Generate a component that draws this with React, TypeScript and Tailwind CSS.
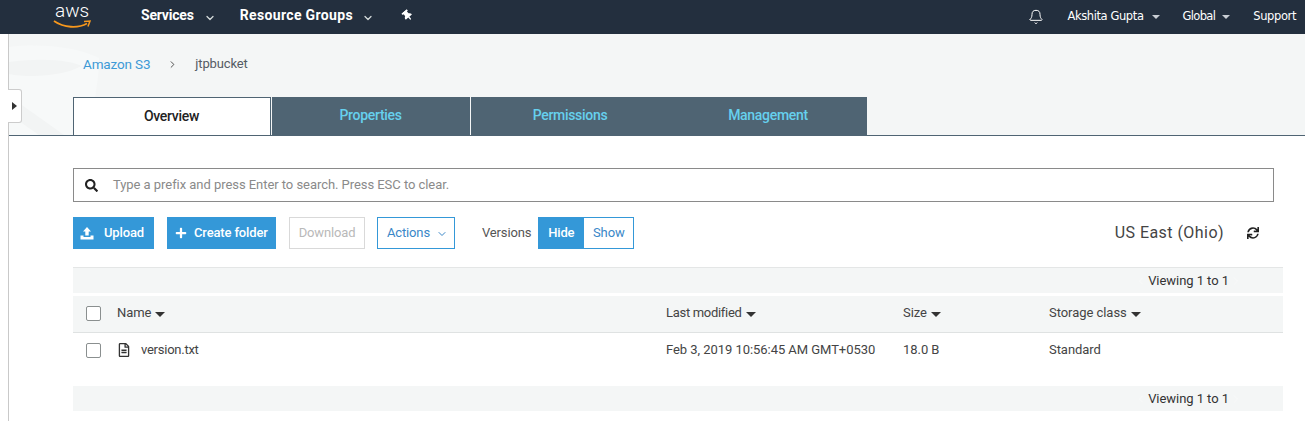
import React from "react";
import { ChevronDown, ChevronLeft, ChevronRight, Bell } from "lucide-react";
import { FaSearch, FaSync, FaThumbtack, FaRegFileAlt, FaPlus } from "react-icons/fa";

function Caret() {
  return <span className="inline-block w-0 h-0 ml-[4px] mt-[2px] border-x-[5px] border-x-transparent border-t-[5px] border-t-[#333]" />;
}

function SmallCaret() {
  return <span className="inline-block w-0 h-0 border-x-[4px] border-x-transparent border-t-[4px] border-t-[#c9ced4]" />;
}

function Check() {
  return <span className="block w-[15px] h-[15px] border border-[#8a8f8f] rounded-[2px] bg-white" />;
}

function Pager() {
  return (
    <div className="h-[25px] bg-[#f4f6f6] flex items-center justify-end pr-[54px] text-[13px] leading-none text-[#333]">
      <ChevronLeft size={12} strokeWidth={1.5} className="text-[#fafafa] mr-[1px]" />
      <span className="tracking-[-0.05px]">Viewing 1 to 1</span>
      <ChevronRight size={12} strokeWidth={1.5} className="text-[#fafafa] ml-[1px] -mr-[13px]" />
    </div>
  );
}

export default function App() {
  return (
    <div className="w-[1305px] h-[421px] overflow-hidden bg-white font-['Roboto',sans-serif] text-[#444]">
      {/* top nav */}
      <div className="h-[34px] bg-[#232f3e] flex items-center text-white">
        <div className="w-[141px] pl-[54px] shrink-0">
          <svg width="38" height="28" viewBox="0 0 38 28" className="mt-[1px] overflow-visible">
            <text x="1" y="13" fontFamily="Roboto, sans-serif" fontSize="19" fontWeight="300" fill="#fff">aws</text>
            <path d="M0 17 C10 24 24 24.500 33 19.500" fill="none" stroke="#f7981d" strokeWidth="1.800" />
            <path d="M30 17.500 L36 17 L34 22.500" fill="none" stroke="#f7981d" strokeWidth="1.500" />
          </svg>
        </div>
        <span className="text-[14px] font-bold tracking-[-0.2px] mt-[-3px]">Services</span>
        <ChevronDown size={12} strokeWidth={2.5} className="ml-[10px] mt-[2px] text-[#d5dbdb]" />
        <span className="ml-[24px] text-[14px] font-bold tracking-[0.35px] mt-[-3px]">Resource Groups</span>
        <ChevronDown size={12} strokeWidth={2.5} className="ml-[9px] mt-[2px] text-[#d5dbdb]" />
        <FaThumbtack size={11} className="ml-[28px] -mt-[3px] rotate-[-40deg]" />
        <div className="ml-auto flex items-center text-[11.500px] font-['DejaVu_Sans',sans-serif] tracking-[-0.4px]">
          <Bell size={16} strokeWidth={1.5} className="mr-[23px]" />
          <span>Akshita Gupta</span>
          <span className="ml-[8px] mr-[23px] flex"><SmallCaret /></span>
          <span className="tracking-[-0.65px]">Global</span>
          <span className="ml-[7px] mr-[23px] flex"><SmallCaret /></span>
          <span className="mr-[9px]">Support</span>
        </div>
      </div>

      <div className="flex h-[387px]">
        {/* side rail */}
        <div className="relative z-10 w-[9px] shrink-0 border-r border-[#c9c9c9] bg-white">
          <div className="absolute left-[8px] top-[55px] w-[14px] h-[34px] bg-white border border-l-0 border-[#ccc] rounded-r-[3px] flex items-center justify-center">
            <span className="w-0 h-0 border-y-[4px] border-y-transparent border-l-[5px] border-l-[#333]" />
          </div>
        </div>

        <div className="flex-1 min-w-0">
          {/* header band */}
          <div className="relative h-[102px] bg-[#f4f6f6] border-b border-[#4f6473] overflow-hidden">
            <svg width="110" height="101" viewBox="0 0 110 101" className="absolute left-0 top-0">
              <path d="M0 13 C35 9 70 14 90 24 C90 50 84 70 80 101 H0 Z" fill="#f7f9f9" />
              <path d="M0 28 C35 23 65 27 72 32 C60 40 25 45 0 40 Z" fill="#f2f4f4" />
              <path d="M0 62 L55 101 H30 L0 80 Z" fill="#f2f4f4" />
            </svg>
            <div className="relative flex items-center pt-[22px] pl-[74px] text-[13.500px] leading-[16px] tracking-[-0.15px]">
              <span className="text-[#3d9ad6]">Amazon S3</span>
              <ChevronRight size={11} strokeWidth={2} className="ml-[17px] text-[#444]" />
              <span className="ml-[17px] text-[#545b64] text-[13px]">jtpbucket</span>
            </div>
            <div className="absolute left-[64px] top-[63px] flex h-[39px] text-[14px] tracking-[-0.3px] font-medium">
              <div className="w-[198px] h-[39px] pb-[2px] pr-[1px] bg-white border border-b-0 border-[#4f6473] flex items-center justify-center text-[#222]">Overview</div>
              <div className="ml-[1px] w-[198px] h-[38px] pb-[2px] pr-[1px] bg-[#4f6473] flex items-center justify-center text-[#66d0ee]">Properties</div>
              <div className="ml-[1px] w-[396px] h-[38px] pb-[2px] bg-[#4f6473] flex items-center text-[#66d0ee]">
                <span className="w-[198px] text-center">Permissions</span>
                <span className="w-[198px] text-center">Management</span>
              </div>
            </div>
          </div>

          <div className="pl-[64px] pr-[22px]">
            {/* search */}
            <div className="mt-[32px] mr-[9px] h-[34px] border border-[#8a8a8a] flex items-center pl-[11px] text-[13px] text-[#8a8a8a] tracking-[-0.05px]">
              <FaSearch size={13} className="text-[#222]" />
              <span className="ml-[15px]">Type a prefix and press Enter to search. Press ESC to clear.</span>
            </div>

            {/* toolbar */}
            <div className="mt-[15px] h-[32px] flex items-center text-[13px] tracking-[-0.15px]">
              <div className="w-[81px] h-[32px] pb-[1px] bg-[#3498d8] text-white flex items-center pl-[7px] font-medium">
                <svg width="14" height="14" viewBox="0 0 14 14" fill="#fff">
                  <path d="M7 1 L11 5.500 H8.700 V9.500 H5.300 V5.500 H3 Z" />
                  <path d="M0.500 9.500 H3.500 V11 H10.500 V9.500 H13.500 V13.500 H0.500 Z" />
                </svg>
                <span className="ml-[10px]">Upload</span>
              </div>
              <div className="ml-[13px] w-[109px] h-[32px] pb-[1px] bg-[#3498d8] text-white flex items-center pl-[8px] font-medium">
                <FaPlus size={12} />
                <span className="ml-[7px]">Create folder</span>
              </div>
              <div className="ml-[13px] w-[76px] h-[32px] pb-[1px] border border-[#d9d9d9] text-[#b9b9b9] flex items-center justify-center">Download</div>
              <div className="ml-[12px] w-[78px] h-[32px] pb-[1px] border border-[#3498d8] text-[#3a87c8] flex items-center pl-[9px]">
                Actions
                <ChevronDown size={12} strokeWidth={2} className="ml-[6px] mt-[2px]" />
              </div>
              <span className="ml-[27px] pb-[1px] text-[#555]">Versions</span>
              <div className="ml-[7px] w-[46px] h-[32px] pb-[1px] bg-[#3498d8] text-white flex items-center justify-center font-medium">Hide</div>
              <div className="w-[50px] h-[32px] pb-[1px] border border-l-0 border-[#3498d8] text-[#3a87c8] flex items-center justify-center">Show</div>
              <span className="ml-auto text-[16px] text-[#444] tracking-[0.45px]">US East (Ohio)</span>
              <FaSync size={12} className="ml-[23px] mr-[24px] text-[#222]" />
            </div>

            {/* table */}
            <div className="mt-[18px] border-t border-[#e4e6e6]"><Pager /></div>
            <div className="mt-[3px] h-[37px] pb-[2px] bg-[#f4f6f6] border-b border-[#dfe2e2] flex items-center text-[13px] tracking-[-0.05px] text-[#444]">
              <div className="w-[44px] pl-[13px]"><Check /></div>
              <div className="w-[549px] flex items-center">Name<Caret /></div>
              <div className="w-[238px] flex items-center tracking-[-0.3px]">Last modified<Caret /></div>
              <div className="w-[145px] flex items-center -ml-[1px] mr-[1px]">Size<Caret /></div>
              <div className="flex items-center">Storage class<Caret /></div>
            </div>
            <div className="h-[34px] flex items-center text-[13px] tracking-[-0.05px] text-[#444]">
              <div className="w-[44px] pl-[13px] pt-[1px]"><Check /></div>
              <div className="w-[549px] flex items-center">
                <FaRegFileAlt size={14} className="text-[#333]" />
                <span className="ml-[10px] tracking-[-0.25px]">version.txt</span>
              </div>
              <div className="w-[238px]">Feb 3, 2019 10:56:45 AM GMT+0530</div>
              <div className="w-[145px] -ml-[1px] mr-[1px]">18.0 B</div>
              <div>Standard</div>
            </div>
            <div className="mt-[19px]"><Pager /></div>
          </div>
        </div>
      </div>
    </div>
  );
}
